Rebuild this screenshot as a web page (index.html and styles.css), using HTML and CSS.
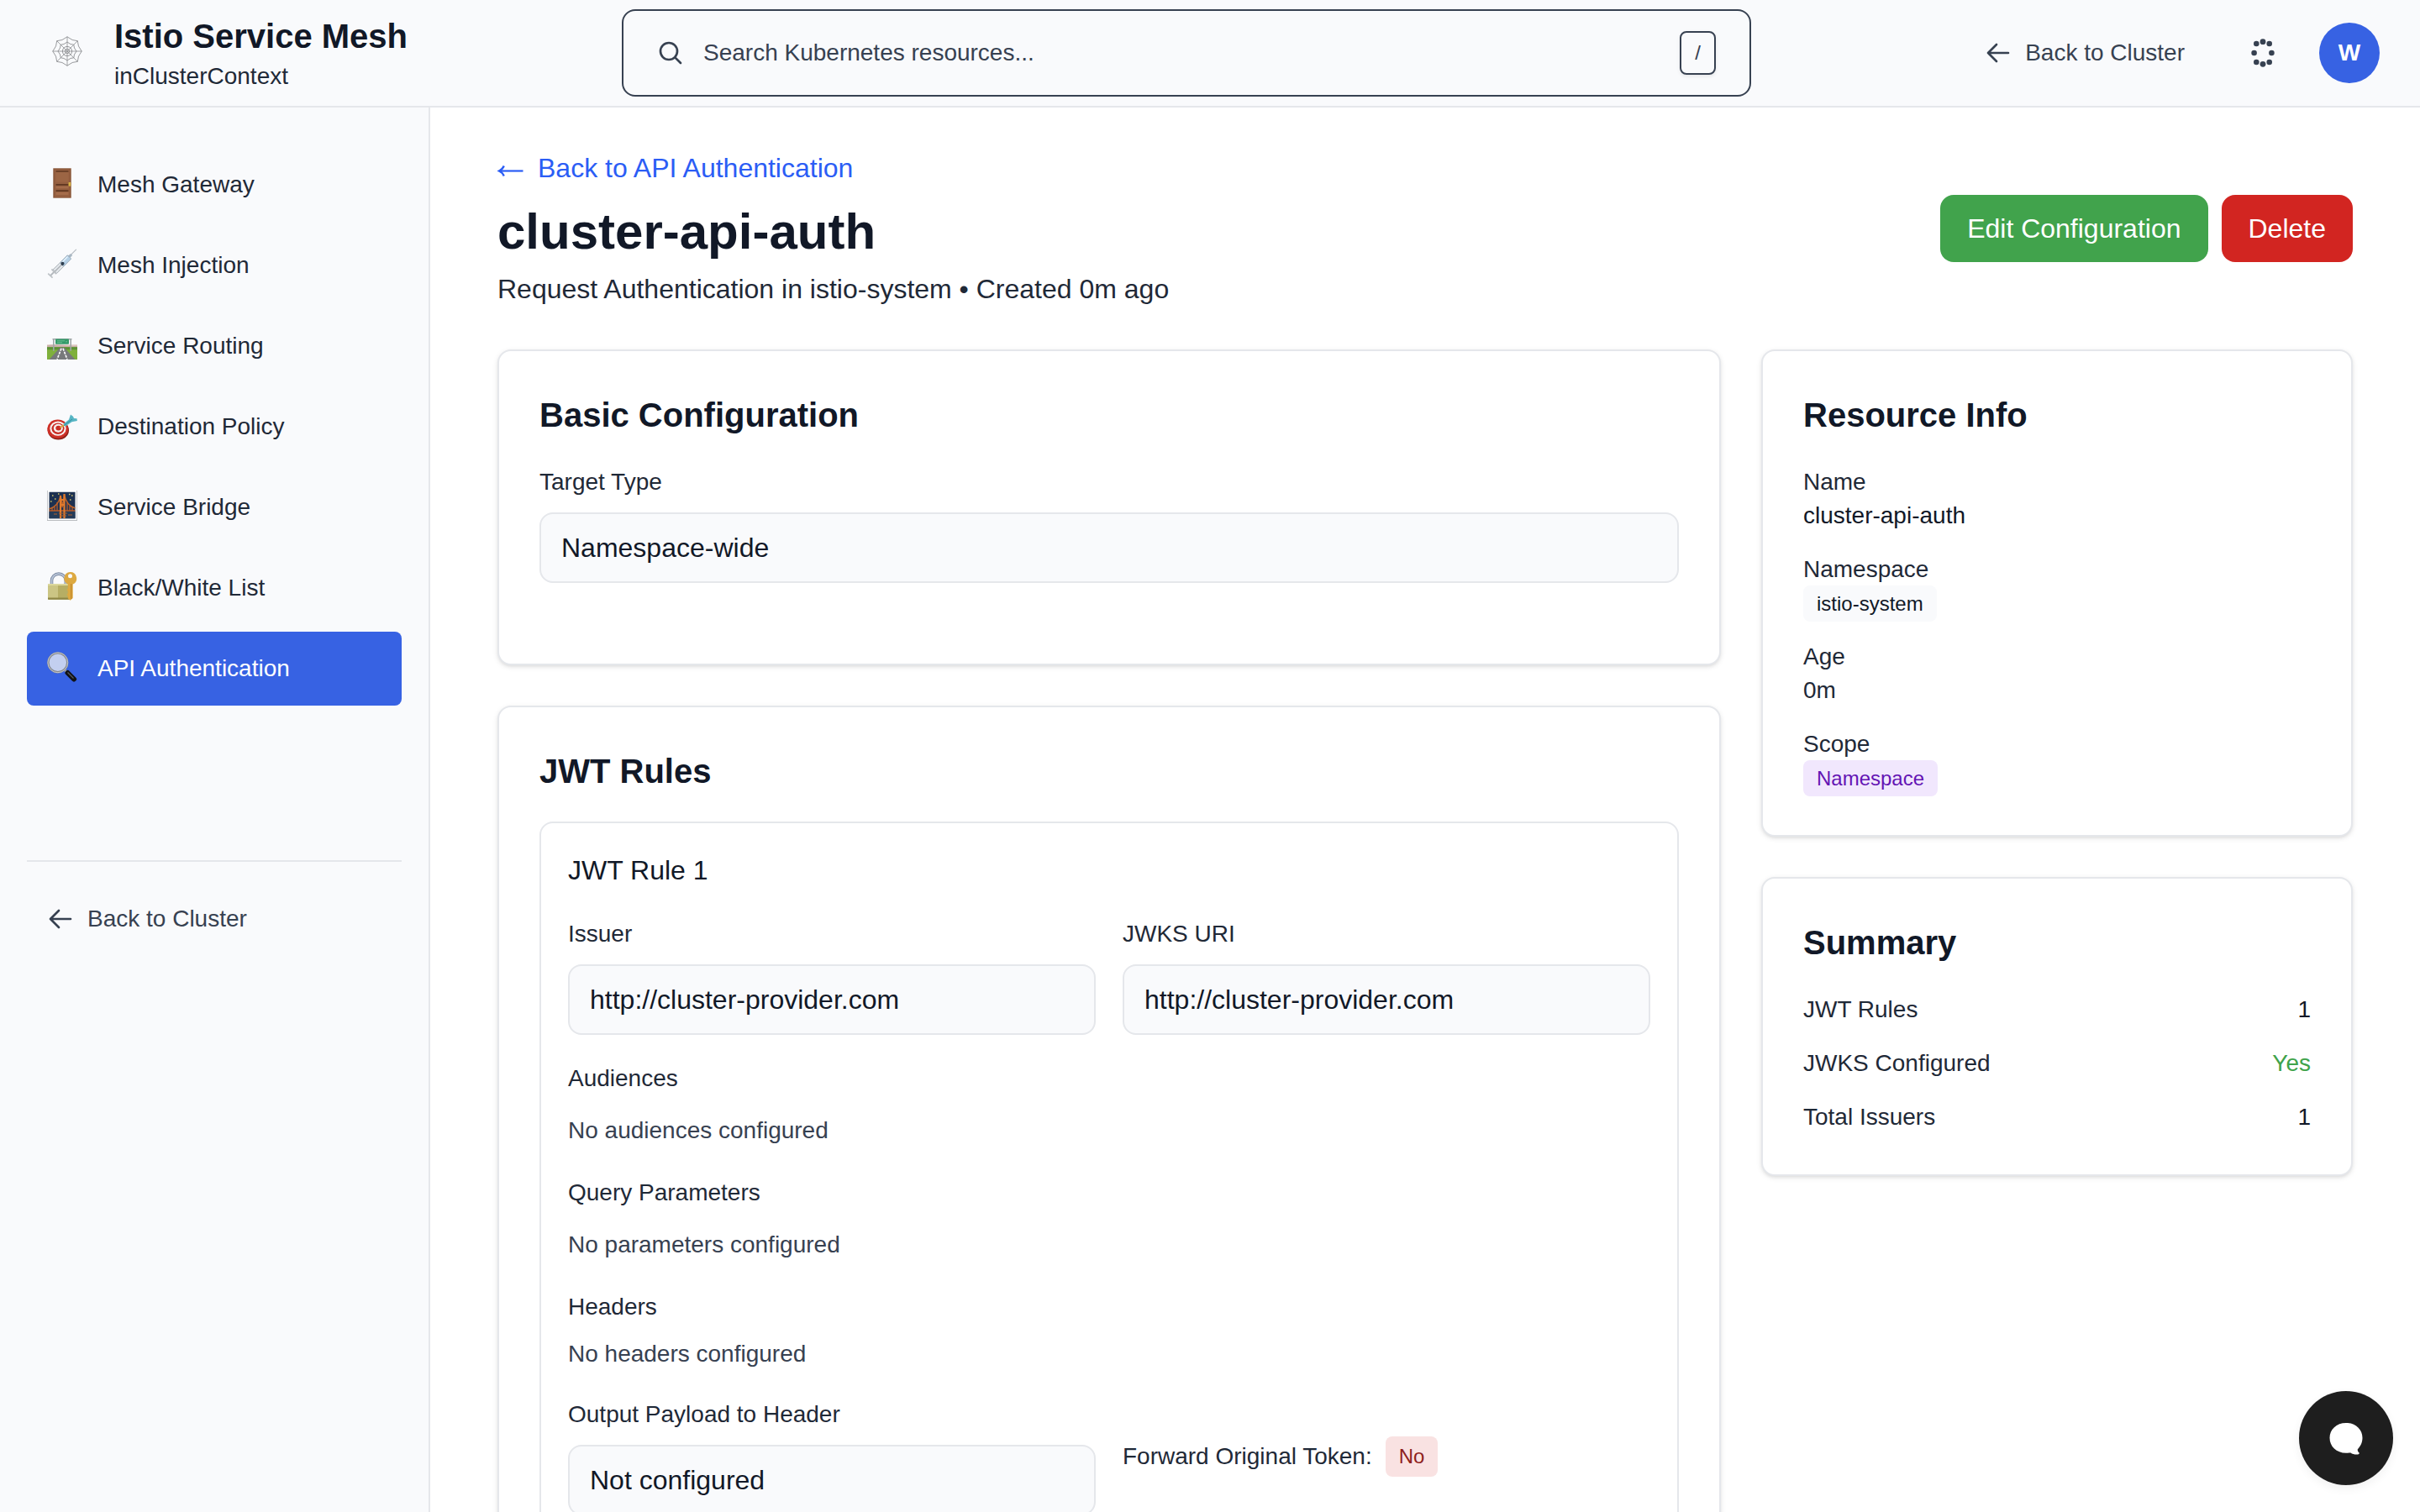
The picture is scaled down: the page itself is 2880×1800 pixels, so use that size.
FILE: index.html
```html
<!DOCTYPE html>
<html lang="en">
<head>
<meta charset="utf-8">
<title>Istio Service Mesh</title>
<link rel="stylesheet" href="styles.css">
</head>
<body>
<svg class="defs" aria-hidden="true">
  <symbol id="arrow-left" viewBox="0 0 24 24">
    <path d="M10.5 19.5 3 12m0 0 7.5-7.5M3 12h18" fill="none" stroke="currentColor" stroke-width="2" stroke-linecap="round" stroke-linejoin="round"/>
  </symbol>
</svg>

<header class="topbar">
  <div class="brand">
    <svg class="brand-icon" viewBox="0 0 36 36" fill="none" stroke="#8d8f92" stroke-width=".9">
      <path d="M18 .5v35M.5 18h35M5.6 5.6l24.8 24.8M30.4 5.6 5.6 30.4" stroke="#999b9e"/>
      <path d="M18 .8Q24 5.8 30.3 5.7Q30.2 12 35.2 18Q30.2 24 30.3 30.3Q24 30.2 18 35.2Q12 30.2 5.7 30.3Q5.8 24 .8 18Q5.8 12 5.7 5.7Q12 5.8 18 .8Z"/>
      <path d="M18 7Q22 10.5 25.8 10.2Q25.5 14 29 18Q25.5 22 25.8 25.8Q22 25.5 18 29Q14 25.5 10.2 25.8Q10.5 22 7 18Q10.5 14 10.2 10.2Q14 10.5 18 7Z"/>
      <circle cx="18" cy="18" r="5.6"/><circle cx="18" cy="18" r="2.6"/>
    </svg>
    <div>
      <div class="brand-title">Istio Service Mesh</div>
      <div class="brand-sub">inClusterContext</div>
    </div>
  </div>
  <div class="search">
    <svg class="icon" viewBox="0 0 24 24" fill="none" stroke="currentColor" stroke-width="2" stroke-linecap="round" stroke-linejoin="round"><path d="m21 21-5.197-5.197m0 0A7.5 7.5 0 1 0 5.196 5.196a7.5 7.5 0 0 0 10.607 10.607Z"/></svg>
    <span class="search-text">Search Kubernetes resources...</span>
    <kbd class="kbd">/</kbd>
  </div>
  <div class="actions">
    <a class="back"><svg class="icon"><use href="#arrow-left"/></svg>Back to Cluster</a>
    <svg class="dots" viewBox="0 0 36 36" fill="currentColor">
      <circle cx="17" cy="4.700" r="3.400"/><circle cx="24.700" cy="7" r="3.300"/><circle cx="27.400" cy="18" r="3.300"/><circle cx="24.700" cy="29" r="3.300"/><circle cx="17" cy="31.300" r="3.400"/><circle cx="9.300" cy="29" r="3.300"/><circle cx="6.600" cy="18" r="3.300"/><circle cx="9.300" cy="7" r="3.300"/>
    </svg>
    <div class="avatar">W</div>
  </div>
</header>

<div class="shell">
  <aside class="sidebar">
    <nav class="nav">
      <a class="nav-item">
        <svg class="emoji" viewBox="0 0 36 36">
          <path d="M7.3.3h21.4v35.4H7.3z" fill="#8a5638"/><path d="M9 1.8h18v33H9z" fill="#955f40"/>
          <path d="M10.5 3.5h15v13h-15z" fill="#9c6544"/><path d="M10.5 3.2h15v1.6h-15zM10.5 19h15v1.8h-15zM10.5 26.2h15v1.8h-15z" fill="#5f3720"/>
          <path d="M10.5 22h15v2.2h-15zM10.5 29h15v3h-15z" fill="#a56c4a"/><path d="M25.6 17h2.6v4.6h-2.6z" fill="#d9b541"/>
        </svg>
        Mesh Gateway
      </a>
      <a class="nav-item">
        <svg class="emoji" viewBox="0 0 36 36">
          <path d="m34.8.8-7.5 7.6" stroke="#b4bac0" stroke-width="1.1"/>
          <path d="m28.2 6 2 2-3.4 3.6-2.6-2.6z" fill="#a9b7c4"/>
          <path d="m24.3 7.7 4.4 4.4-9 9.2-4.6-4.4z" fill="#b5d0e6" stroke="#93a3b1" stroke-width=".8"/>
          <path d="m15.2 17 4.4 4.4-8 8-4.6-4.5z" fill="#e1e5e9" stroke="#a1a8ae" stroke-width=".8"/>
          <path d="m24.5 9.5-9 9.2" stroke="#e8f4fd" stroke-width="1.3"/>
          <path d="m18.5 18-10 10" stroke="#85898f" stroke-width="1"/>
          <circle cx="18.4" cy="17.8" r="2.1" fill="#2e3d4e"/>
          <path d="m8.8 27.4-5 5" stroke="#b3b8bd" stroke-width="2"/>
          <path d="m1.700 30.200 4.300 4M6 25l4.500 4.500" stroke="#bdc2c6" stroke-width="1.800" stroke-linecap="round"/>
        </svg>
        Mesh Injection
      </a>
      <a class="nav-item">
        <svg class="emoji" viewBox="0 0 36 36">
          <g transform="translate(0 2.800)">
            <path d="M0 15.500h36v4H0z" fill="#dfc9c2"/><path d="M0 16.500q8-2 18-.5t18 1v4H0z" fill="#c9b0aa"/>
            <path d="M0 18.500h36v14.700H0z" fill="#7fb03c"/><path d="M0 18.500h36v3H0z" fill="#5b9136"/>
            <path d="M15.500 19h5L33.500 33.200h-31z" fill="#77797b"/><path d="m17 20-5 13M19 20l5 13" stroke="#fff" stroke-width="1.600" stroke-dasharray="3 1.300"/>
            <path d="M7.800 23V8.500M28.200 23V8.500M6.500 9h23" stroke="#a0a7a8" stroke-width="1.600" fill="none"/>
            <rect x="10" y="8.600" width="16" height="6.400" rx=".8" fill="#349a69"/><path d="M12 11h9M12 13h6M22 12h2" stroke="#68bd91" stroke-width="1"/>
          </g>
        </svg>
        Service Routing
      </a>
      <a class="nav-item">
        <svg class="emoji" viewBox="0 0 36 36">
          <g transform="translate(0 4.700) scale(1 .9)">
            <circle cx="13.400" cy="21.600" r="12.600" fill="#8f2118"/><circle cx="12.700" cy="20" r="12.400" fill="#ce3027"/>
            <circle cx="13" cy="19.400" r="9.600" fill="#f8f1ef"/><circle cx="13" cy="19.400" r="7.500" fill="#c92d24"/>
            <circle cx="13.300" cy="19" r="5.500" fill="#f8f1ef"/><circle cx="13.600" cy="18.800" r="3.300" fill="#c92d24"/>
            <path d="m15.500 18 6-4" stroke="#dba63f" stroke-width="2"/>
            <path d="m19.500 13.500 6.500-6 2-6.500 3 2.300 1 2.500 3.500.5.4 3-6.400 1.300-8 6z" fill="#57b5c4"/><path d="m20 15.500 10-8.500" stroke="#2e8e9e" stroke-width="1"/>
          </g>
        </svg>
        Destination Policy
      </a>
      <a class="nav-item">
        <svg class="emoji" viewBox="0 0 36 36">
          <path d="M0 0h36v36H0z" fill="#b9bcbf"/><path d="M.8 0h34.400v35H.8z" fill="#fff"/><path d="M2.500 1.800h31v31.400h-31z" fill="#1d3151"/>
          <path d="M2.500 25h31v8.200h-31z" fill="#253b58"/><path d="M6 6h1.500M13 4h1.500M9 10h1.500M29 6h1.500M26 4.500h1.500M27 11h1.500M4 13h1.500" stroke="#d6c76b" stroke-width="1.500"/>
          <path d="M2.500 22Q13 19 16 7q1.500 3 2 13Q20 10 20.500 5 23 18 33.500 21" fill="none" stroke="#bf6429" stroke-width="1.400"/>
          <path d="M2.500 24h31M6 21v3M9 18.500v6M12 14v10M24 14v10M27 18v6M30 20v4" stroke="#b95c2a" stroke-width="1.300"/>
          <path d="M16 6v27M20.500 4v29M16 11h4.500M16 17h4.500" stroke="#e07a2d" stroke-width="2.200"/><path d="M14 27h10M15 30h8M8 28h4M25 29h5" stroke="#ae612f" stroke-width="1"/>
        </svg>
        Service Bridge
      </a>
      <a class="nav-item">
        <svg class="emoji" viewBox="0 0 36 36">
          <path d="M5.500 17V11.500a8.400 8.400 0 0 1 16.800 0V17" fill="none" stroke="#7d8ba3" stroke-width="3.600"/>
          <path d="M5.500 17V11.500a8.400 8.400 0 0 1 16.800 0V17" fill="none" stroke="#b9c5d8" stroke-width="1.800"/>
          <path d="M1 15h27v17.800q0 1-1 1H2q-1 0-1-1z" fill="#b6ae64"/><path d="M1 15h12v18.800H2q-1 0-1-1z" fill="#cbc584"/>
          <path d="M1 15h27v2H1z" fill="#dcd89d"/><path d="M1 31.500h27V33q0 .8-1 .8H2q-1 0-1-.8z" fill="#8f8847"/>
          <path d="M27.500 1a7.600 7.600 0 0 1 3.200 14.500V32l-3 2.800-2.900-2.300v-3l-1.400-1.600 1.400-1.700v-2.400l-1.400-1.700 1.400-1.500v-5.100A7.600 7.600 0 0 1 27.500 1Z" fill="#dda941"/>
          <path d="M28.800 15v18" stroke="#b97e25" stroke-width="1"/><circle cx="27.500" cy="5.800" r="2.500" fill="#f9fafc"/>
        </svg>
        Black/White List
      </a>
      <a class="nav-item nav-item-active">
        <svg class="emoji" viewBox="0 0 36 36">
          <path d="m21.500 22 3 3" stroke="#a5a8ac" stroke-width="3"/>
          <path d="m24.500 25 7.500 7.500" stroke="#111214" stroke-width="6" stroke-linecap="round"/><path d="m24.500 24.500 7 7" stroke="#55585c" stroke-width="1.300"/>
          <circle cx="12.800" cy="12.800" r="11.400" fill="#c3cff0" stroke="#85888d" stroke-width="2.400"/><circle cx="12.800" cy="12.800" r="11.900" fill="none" stroke="#d7d9dc" stroke-width=".8"/>
        </svg>
        API Authentication
      </a>
    </nav>
    <div class="side-foot">
      <a class="back"><svg class="icon"><use href="#arrow-left"/></svg>Back to Cluster</a>
    </div>
  </aside>

  <main class="main">
    <div class="page-head">
      <div>
        <a class="crumb"><svg class="crumb-arrow" viewBox="0 0 32 32" fill="none" stroke="currentColor" stroke-width="2.200"><path d="M3 18.500H30.500"/><path d="M7.800 12.500Q5.800 16.800 2 18.500 5.800 20.200 7.800 24.500" stroke-width="2.400"/></svg>Back to API Authentication</a>
        <h1 class="page-title">cluster-api-auth</h1>
        <p class="page-sub">Request Authentication in istio-system • Created 0m ago</p>
      </div>
      <div class="buttons">
        <button class="btn btn-green">Edit Configuration</button>
        <button class="btn btn-red">Delete</button>
      </div>
    </div>

    <div class="columns">
      <div class="stack">
        <section class="card basic">
          <h2 class="card-title">Basic Configuration</h2>
          <div class="label">Target Type</div>
          <div class="field">Namespace-wide</div>
        </section>
        <section class="card">
          <h2 class="card-title">JWT Rules</h2>
          <div class="rule">
            <h3 class="rule-title">JWT Rule 1</h3>
            <div class="pair">
              <div><div class="label">Issuer</div><div class="field">http://cluster-provider.com</div></div>
              <div><div class="label">JWKS URI</div><div class="field">http://cluster-provider.com</div></div>
            </div>
            <div><div class="label">Audiences</div><div class="empty empty-tall">No audiences configured</div></div>
            <div><div class="label">Query Parameters</div><div class="empty empty-tall">No parameters configured</div></div>
            <div><div class="label">Headers</div><div class="empty">No headers configured</div></div>
            <div class="pair pair-center">
              <div><div class="label">Output Payload to Header</div><div class="field">Not configured</div></div>
              <div class="token"><span>Forward Original Token:</span><span class="badge badge-red">No</span></div>
            </div>
          </div>
        </section>
      </div>

      <div class="stack">
        <section class="card">
          <h2 class="card-title">Resource Info</h2>
          <dl class="info">
            <div><dt>Name</dt><dd class="strong">cluster-api-auth</dd></div>
            <div><dt>Namespace</dt><dd><span class="badge badge-gray">istio-system</span></dd></div>
            <div><dt>Age</dt><dd>0m</dd></div>
            <div><dt>Scope</dt><dd><span class="badge badge-purple">Namespace</span></dd></div>
          </dl>
        </section>
        <section class="card">
          <h2 class="card-title">Summary</h2>
          <dl class="info">
            <div class="row"><dt>JWT Rules</dt><dd class="strong">1</dd></div>
            <div class="row"><dt>JWKS Configured</dt><dd class="yes">Yes</dd></div>
            <div class="row"><dt>Total Issuers</dt><dd class="strong">1</dd></div>
          </dl>
        </section>
      </div>
    </div>
  </main>
</div>

<button class="chat" aria-label="Chat">
  <svg viewBox="0 0 40 40" fill="#fff"><path d="M20 0C31.500 0 39.500 7.800 39.500 17.800 39.500 23.500 37 28 33.800 31.200 33.500 33.200 34.300 34.600 35.600 35.500 36 36.600 35.300 37.500 34 37.500 30.500 37.700 27.500 37.200 25.500 35.500 23.500 35.600 21.800 35.800 20 35.800 8.500 35.800.5 28 .5 17.800.5 7.800 8.500 0 20 0Z"/></svg>
</button>
</body>
</html>
```
FILE: styles.css
```css
* { box-sizing: border-box; margin: 0; padding: 0; }

body {
  height: 1800px;
  overflow: hidden;
  background: #fff;
  color: #1f2937;
  font: 28px/40px "Liberation Sans", Arial, sans-serif;
}

.defs { display: none; }
.icon { width: 32px; height: 32px; flex: none; }

/* Top bar */
.topbar {
  height: 128px;
  display: grid;
  grid-template-columns: 740px 1344px 1fr;
  align-items: center;
  background: #f9fafc;
  border-bottom: 2px solid #e5e7eb;
}
.brand { display: flex; align-items: center; gap: 38px; padding-left: 62px; }
.brand-icon { width: 36px; height: 36px; margin-top: -4px; }
.brand-title { font-size: 40px; line-height: 50px; font-weight: 700; color: #111827; }
.brand-sub { height: 40px; line-height: 45px; }

.search {
  height: 104px;
  display: flex;
  align-items: center;
  padding: 0 40px;
  border: 2px solid #374151;
  border-radius: 16px;
  color: #374151;
}
.search-text { flex: 1; margin-left: 23px; }
.kbd {
  height: 52px;
  padding: 0 16px;
  border: 2px solid #374151;
  border-radius: 8px;
  box-shadow: 0 2px 4px rgba(0, 0, 0, .08);
  font: 24px/48px "Liberation Sans", Arial, sans-serif;
}

.actions { display: flex; align-items: center; justify-content: flex-end; padding-right: 48px; color: #374151; }
.back { display: flex; align-items: center; gap: 16px; color: #374151; }
.dots { width: 36px; height: 36px; margin: 0 48px 0 76px; }
.avatar {
  width: 72px;
  height: 72px;
  border-radius: 50%;
  background: #3762e3;
  color: #fff;
  font-weight: 700;
  line-height: 72px;
  text-align: center;
}

.shell { display: flex; height: 1672px; }

/* Sidebar */
.sidebar { width: 512px; flex: none; padding: 48px 32px; background: #f9fafc; border-right: 2px solid #e5e7eb; }
.nav { display: flex; flex-direction: column; gap: 8px; }
.nav-item { height: 88px; display: flex; align-items: center; gap: 24px; padding: 0 24px; border-radius: 8px; }
.nav-item-active { background: #3762e3; color: #fff; }
.emoji { width: 36px; height: 36px; margin-top: -4px; flex: none; }
.side-foot { margin-top: 184px; padding: 48px 24px 0; border-top: 2px solid #e5e7eb; }

/* Page heading */
.main { flex: 1; padding: 48px 80px; }
.page-head { display: flex; justify-content: space-between; align-items: center; margin-bottom: 48px; }
.crumb { display: flex; gap: 16px; color: #2b5df5; font-size: 32px; line-height: 48px; }
.crumb-arrow { width: 32px; height: 32px; margin-top: 9px; }
.page-title { margin: 16px 0 8px; font-size: 60px; line-height: 72px; color: #111827; }
.page-sub { font-size: 32px; line-height: 48px; }
.buttons { display: flex; gap: 16px; }
.btn { height: 80px; padding: 0 32px; border: 0; border-radius: 16px; color: #fff; font: 32px/48px "Liberation Sans", Arial, sans-serif; }
.btn-green { background: #41a34c; }
.btn-red { background: #d22521; }

/* Cards */
.columns { display: grid; grid-template-columns: 1456px 704px; gap: 48px; align-items: start; }
.stack { display: grid; gap: 48px; }
.card {
  padding: 48px;
  border: 2px solid #e5e7eb;
  border-radius: 16px;
  background: #fff;
  box-shadow: 0 2px 6px rgba(0, 0, 0, .1), 0 2px 4px -2px rgba(0, 0, 0, .1);
}
.basic { padding-bottom: 96px; }
.card-title { margin-bottom: 32px; font-size: 40px; line-height: 56px; color: #111827; }
.label { margin-bottom: 16px; }
.field {
  padding: 16px 24px;
  border: 2px solid #e5e7eb;
  border-radius: 16px;
  background: #f9fafc;
  color: #111827;
  font-size: 32px;
  line-height: 48px;
}
.rule { display: grid; gap: 32px; padding: 32px; border: 2px solid #e5e7eb; border-radius: 16px; }
.rule-title { font-size: 32px; line-height: 48px; font-weight: 400; color: #111827; }
.pair { display: grid; grid-template-columns: 1fr 1fr; gap: 32px; }
.pair-center { align-items: center; }
.empty { color: #374151; }
.empty-tall { padding: 6px 0 2px; }
.token { display: flex; align-items: center; gap: 16px; }

.badge { padding: 8px 16px; border-radius: 8px; font-size: 24px; }
.badge-red { line-height: 32px; background: #f9e2e2; color: #8f1f1d; }
.badge-gray { background: #f9fafc; color: #111827; }
.badge-purple { background: #f1e7fd; color: #6414b4; }

.info { display: grid; gap: 24px; }
.info dd { height: 40px; }
.row { display: flex; justify-content: space-between; }
.strong { color: #111827; }
.yes { color: #3fa34b; }

/* Chat launcher floats over the page */
.chat {
  position: absolute;
  right: 32px;
  bottom: 32px;
  width: 112px;
  height: 112px;
  display: flex;
  align-items: center;
  justify-content: center;
  border: 0;
  border-radius: 50%;
  background: #1e1e1e;
  box-shadow: 0 4px 12px rgba(0, 0, 0, .06);
}
.chat svg { width: 40px; height: 40px; margin-top: 4px; }
```
